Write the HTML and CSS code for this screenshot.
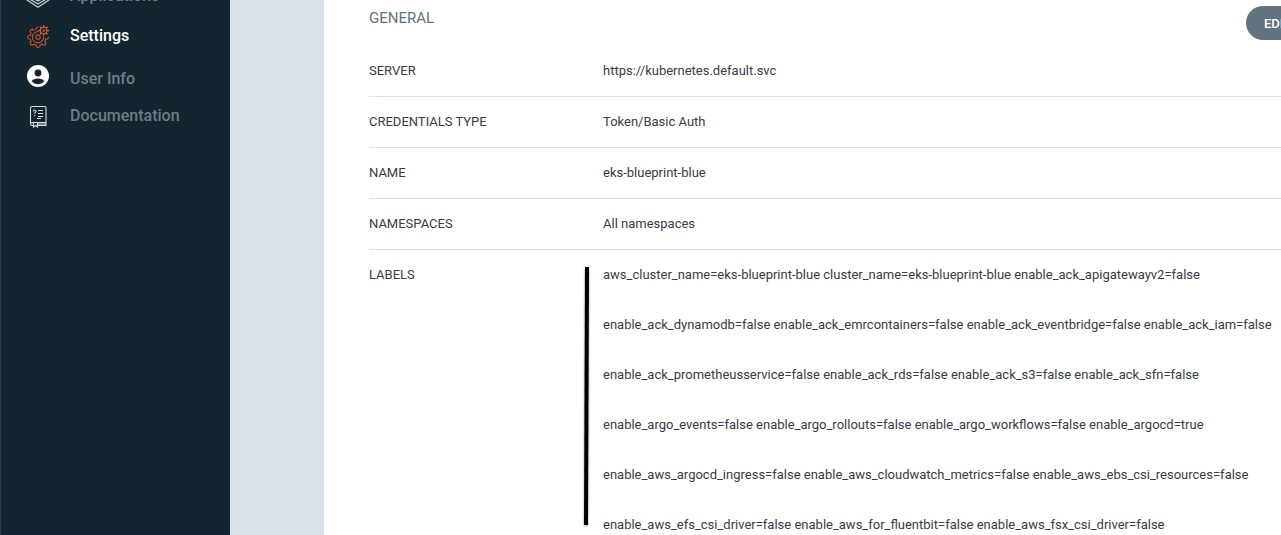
FILE: index.html
```html
<!DOCTYPE html>
<html lang="en">
<head>
<meta charset="utf-8">
<title>Cluster settings</title>
<link rel="stylesheet" href="styles.css">
</head>
<body>
<div class="app">
  <nav class="sidebar" aria-label="Main">
    <a class="nav-item" href="#applications">
      <svg class="nav-icon" viewBox="0 0 24 24" fill="none" stroke="#c3ced3" stroke-width="1.3" stroke-linejoin="round"><path d="M12 1 23 7 12 13 1 7zM1 7v4l11 6 11-6V7M1 11v5l11 7.200 11-7.200v-5M3.500 12.500v2.500L12 20l8.500-5v-2.500"/></svg>
      <span>Applications</span>
    </a>
    <a class="nav-item active" href="#settings">
      <svg class="nav-icon" viewBox="0 0 24 24" fill="none" stroke="#e0592f" stroke-linejoin="round" stroke-linecap="round">
        <defs><path id="tooth" d="M-2.100 7.700-1.600 9.700Q0 11 1.600 9.700L2.100 7.700Q3 7.300 3.960 6.930"/></defs>
        <g transform="translate(12 13.200)">
          <use href="#tooth"/>
          <use href="#tooth" transform="rotate(45)"/>
          <use href="#tooth" transform="rotate(90)"/>
          <use href="#tooth" transform="rotate(135)"/>
          <use href="#tooth" transform="rotate(-45)"/>
          <path d="M-2.100-7.700-1.600-9.700Q-1-10.300 0-10.300M7.700 2.100 9.700 1.600Q10.500 1 10.500 0M0-5.700A5.700 5.700 0 1 0 5.700 0"/>
          <rect x="-2" y="-2" width="4" height="4" rx="1"/>
        </g>
        <circle cx="17.700" cy="6.500" r="3.500"/><circle cx="17.700" cy="6.500" r="1"/>
        <path d="M17.700 1.800v1M17.700 10.200v1M13 6.500h1M21.400 6.500h1M14.400 3.200l.7.700M20.300 9.100l.7.700M21 3.200l-.7.700M15.100 9.100l-.7.700" stroke-width="1.500"/>
      </svg>
      <span>Settings</span>
    </a>
    <a class="nav-item user" href="#user-info">
      <svg class="nav-icon" viewBox="0 0 24 24"><circle cx="12" cy="12" r="11" fill="#fff"/><circle cx="12" cy="9" r="3.400" fill="#13252e"/><path d="M5.800 17.200c1.200-3.600 11.200-3.600 12.400 0-2.800 4-9.600 4-12.400 0z" fill="#13252e"/></svg>
      <span>User Info</span>
    </a>
    <a class="nav-item docs" href="#documentation">
      <svg class="nav-icon" viewBox="0 0 24 24" fill="none" stroke="#d5dcdf" stroke-width="1.100"><path d="M7 21.500H6.300A1.800 1.800 0 0 1 4.500 19.700V4A1.500 1.500 0 0 1 6 2.500H18.500A1.500 1.500 0 0 1 20 4V21.500H12M4.500 19.700C4.500 18.800 5 18.500 6 18.500H20M7.500 19v4L9.500 21.500l2 1.500V19M12 20h8"/><path d="M7.300 7.500C7.300 5.500 10 5.600 10 7.300 10 8.500 8.600 8.300 8.600 9.800M8.600 11v1M12 6.500h5M12 9.500h5M12 12.500h5M11 14.500h4"/></svg>
      <span>Documentation</span>
    </a>
  </nav>
  <main class="content">
    <section class="panel">
      <header class="panel-head">
        <h1 class="panel-title">GENERAL</h1>
        <button class="edit" type="button">EDIT</button>
      </header>
      <dl class="details">
        <div class="row"><dt>SERVER</dt><dd>https://kubernetes.default.svc</dd></div>
        <div class="row"><dt>CREDENTIALS TYPE</dt><dd>Token/Basic Auth</dd></div>
        <div class="row"><dt>NAME</dt><dd>eks-blueprint-blue</dd></div>
        <div class="row"><dt>NAMESPACES</dt><dd>All namespaces</dd></div>
        <div class="row labels">
          <dt>LABELS</dt>
          <dd>
            <svg class="marker" viewBox="0 0 12 264"><path d="M5 2h4L8 260H4z"/></svg>
            aws_cluster_name=eks-blueprint-blue cluster_name=eks-blueprint-blue enable_ack_apigatewayv2=false<br>
            enable_ack_dynamodb=false enable_ack_emrcontainers=false enable_ack_eventbridge=false enable_ack_iam=false<br>
            enable_ack_prometheusservice=false enable_ack_rds=false enable_ack_s3=false enable_ack_sfn=false<br>
            enable_argo_events=false enable_argo_rollouts=false enable_argo_workflows=false enable_argocd=true<br>
            enable_aws_argocd_ingress=false enable_aws_cloudwatch_metrics=false enable_aws_ebs_csi_resources=false<br>
            enable_aws_efs_csi_driver=false enable_aws_for_fluentbit=false enable_aws_fsx_csi_driver=false
          </dd>
        </div>
      </dl>
    </section>
  </main>
</div>
</body>
</html>
```
FILE: styles.css
```css
* { box-sizing: border-box; }
body {
  margin: 0;
  font-family: Roboto, "Liberation Sans", sans-serif;
  font-size: 13px;
  color: #363c4a;
  background: #fff;
  overflow: hidden;
}
.app { display: flex; height: 100vh; overflow: hidden; }
.sidebar {
  flex: 0 0 230px;
  background: #13252e;
  border-left: 1px solid #2d3e47;
}
.nav-item {
  display: flex;
  align-items: center;
  gap: 20px;
  height: 40px;
  padding-left: 25px;
  color: #6f7d85;
  font-size: 16px;
  font-weight: 500;
  line-height: 20px;
  text-decoration: none;
}
.nav-item:first-child { margin-top: -24px; }
.nav-item.active { color: #fff; }
.nav-item.user { height: 42px; align-items: end; }
.nav-item.user span { padding-bottom: 9px; }
.nav-item.user .nav-icon { margin-bottom: 10px; }
.nav-item.docs { height: 36px; }
.nav-icon { width: 24px; height: 24px; flex: none; }
.content {
  flex: 1;
  min-width: 0;
  padding-left: 94px;
  background: #dae1e8;
}
.panel { padding-left: 45px; min-height: 100%; background: #fff; }
.panel-head {
  display: flex;
  justify-content: space-between;
  align-items: flex-start;
  height: 46px;
  margin-right: -36px;
}
.panel-title {
  margin: 0;
  font-size: 15px;
  font-weight: 400;
  line-height: 36px;
  color: #617480;
}
.edit {
  width: 71px;
  height: 34px;
  margin-top: 6px;
  padding: 0 18px;
  border: 0;
  border-radius: 17px;
  background: #61747f;
  color: #fff;
  font: 500 13px Roboto, "Liberation Sans", sans-serif;
  text-align: left;
}
.details { margin: 0; line-height: 50px; }
.row {
  display: grid;
  grid-template-columns: 234px 1fr;
  border-bottom: 1px solid #dae3e9;
}
.row dd { position: relative; margin: 0; white-space: nowrap; }
.row.labels { border: 0; }
.marker {
  position: absolute;
  left: -23px;
  top: 15px;
  width: 12px;
  height: 264px;
  filter: drop-shadow(0 1px 1px #0006);
}
```
